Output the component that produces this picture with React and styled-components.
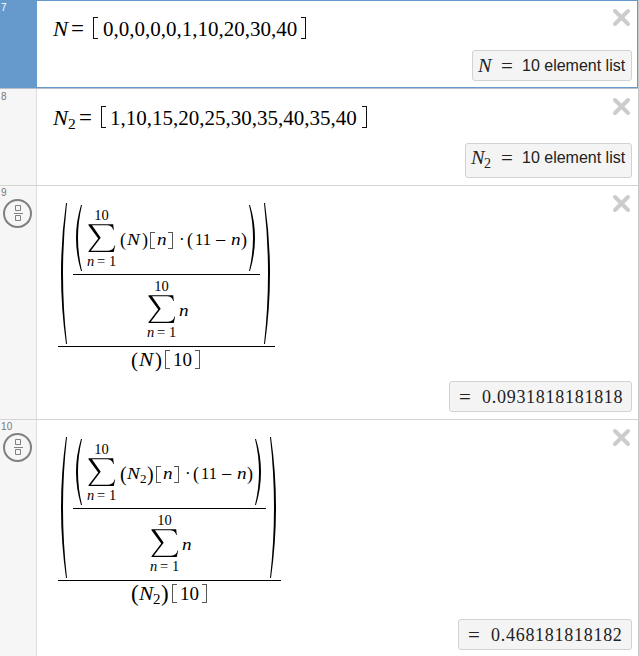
import React from 'react';
import styled, { createGlobalStyle } from 'styled-components';

const Global = createGlobalStyle`
  * { box-sizing: border-box; }
  body { margin: 0; background: #fff; overflow: hidden; }
`;

const List = styled.main`
  width: 639px;
  height: 656px;
  overflow: hidden;
  border-right: 1px solid #c8c8c8;
  background: #fff;
  color: #000;
  font-family: 'Liberation Serif', serif;
`;

const Row = styled.section`
  display: flex;
  height: ${(p) => p.$h}px;
  border-bottom: 1px solid ${(p) => (p.$active ? '#b9bfc6' : '#d4d4d4')};
`;

const Gutter = styled.div`
  width: 37px;
  flex: none;
  padding: ${(p) => p.$pt || 2}px 0 0 1px;
  background: ${(p) => (p.$active ? '#6699cc' : '#f6f6f6')};
  border-right: 1px solid ${(p) => (p.$active ? '#6699cc' : '#dedede')};
  color: ${(p) => (p.$active ? '#fff' : '#777')};
  font: 10px/12px 'Liberation Sans', sans-serif;
  letter-spacing: 0.3px;
`;

const FractionButton = styled.div`
  display: flex;
  margin: 0 0 0 2px;
`;

const Body = styled.div`
  flex: 1;
  display: flex;
  flex-direction: column;
  justify-content: space-between;
  border: solid #6699cc;
  border-width: ${(p) => (p.$active ? '1px 1px 1px 0' : '0')};
  padding: 0 ${(p) => (p.$active ? 5 : 6)}px ${(p) => p.$pb}px 0;
`;

const Top = styled.div`
  display: flex;
  justify-content: space-between;
`;

const Formula = styled.div`
  padding: ${(p) => p.$pt}px 0 0 ${(p) => p.$pl}px;
`;

const CloseIcon = styled.svg`
  flex: none;
  margin-top: ${(p) => p.$mt}px;
`;

const Result = styled.div`
  align-self: flex-end;
  width: ${(p) => p.$w}px;
  height: ${(p) => p.$h}px;
  background: #f4f4f4;
  border: 1px solid #d2d2d2;
  border-radius: 3px;
  color: #222;
`;

const Run = styled.div`
  --base: ${(p) => p.$base}px;
  display: flex;
  align-items: flex-start;
  height: ${(p) => p.$h}px;
  padding-left: ${(p) => p.$pl || 0}px;
`;

const Tok = styled.span`
  flex: none;
  width: ${(p) => p.$w}px;
  margin-top: calc(var(--base) - 15px + ${(p) => p.$dy || 0}px);
  height: 20px;
  line-height: 20px;
  font-size: ${(p) => p.$s}px;
  padding-top: ${(p) => 5 - p.$s * 0.3375}px;
  letter-spacing: ${(p) => p.$ls || 0}px;
  white-space: pre;
`;

const Var = styled(Tok)`
  font-style: italic;
  transform: scaleX(1.13);
  transform-origin: 0 50%;
`;

const Sans = styled(Tok)`
  font-family: 'Liberation Sans', sans-serif;
`;

const Bracket = styled.i`
  flex: none;
  width: 5px;
  height: ${(p) => p.$h}px;
  margin: calc(var(--base) - ${(p) => p.$up}px) ${(p) => p.$gap || 0}px 0 ${(p) => p.$ml || 0}px;
  border: 1px solid ${(p) => (p.$h > 20 ? '#111' : '#555')};
  border-${(p) => (p.$close ? 'left' : 'right')}: 0;
`;

const Fraction = styled.div`
  width: ${(p) => p.$w}px;
  flex: none;
`;

const Bar = styled.div`
  height: 1px;
  background: #000;
`;

const ParenBox = styled.div`
  flex: none;
  width: ${(p) => p.$w}px;
  padding: ${(p) => p.$pt || 0}px 0 0 ${(p) => p.$pl}px;
  svg { display: block; }
`;

const SumBox = styled.div`
  flex: none;
  width: ${(p) => p.$w}px;
  margin-top: ${(p) => p.$mt}px;
  svg { display: block; margin: 1px 0 0 1px; }
`;

const Limit = styled.div`
  display: flex;
  justify-content: center;
  width: 29px;
  height: 16px;
  font-size: 14.5px;
  line-height: 16px;
  white-space: pre;
`;

const LimitPart = styled.span`
  width: ${(p) => p.$w}px;
  font-style: ${(p) => (p.$i ? 'italic' : 'normal')};
`;

function Paren({ h, w, pl, pt, close }) {
  const d = `M6 0Q-2 ${h * 0.5} 6 ${h}L5 ${h}Q-5 ${h * 0.5} 5 0Z`;
  return (
    <ParenBox $w={w} $pl={pl} $pt={pt}>
      <svg width="6" height={h} viewBox={`0 0 6 ${h}`}>
        <path d={d} fill="#000" transform={close ? 'translate(6 0) scale(-1 1)' : undefined} />
      </svg>
    </ParenBox>
  );
}

function Sum({ w, mt }) {
  return (
    <SumBox $w={w} $mt={mt}>
      <Limit>10</Limit>
      <svg width="28" height="29" viewBox="0 0 28 29">
        <path d="M0.5 0.2H25.2L25.8 6H25.2C24.4 2.4 22 1.2 18 1.2H4L12.7 13.7L2.8 26.7H20C23.8 26.7 25.8 24.8 26.5 21.6H27.1L25.8 28.1H0.5V27.2L10.2 14.6L0.5 1.2Z" />
      </svg>
      <Limit>
        <LimitPart $w={10} $i>n</LimitPart>
        <LimitPart $w={12}>=</LimitPart>
        <LimitPart $w={7}>1</LimitPart>
      </Limit>
    </SumBox>
  );
}

function Close({ mt }) {
  return (
    <CloseIcon $mt={mt} width="20" height="20" viewBox="0 0 20 20">
      <path d="M3 3L16 16M16 3L3 16" stroke="#ccc" strokeWidth="4" strokeLinecap="round" />
    </CloseIcon>
  );
}

function TemplateIcon() {
  return (
    <FractionButton>
      <svg width="30" height="30" viewBox="0 0 30 30" fill="none">
        <circle cx="14.5" cy="14.5" r="13.5" stroke="#808080" strokeWidth="2" />
        <path d="M12.5 6.5h5v5h-5zM12.5 16.5h5v5h-5zM11 14.5h9" stroke="#808080" />
      </svg>
    </FractionButton>
  );
}

function Ratio({ sub }) {
  const e = sub ? 6 : 0;
  return (
    <Fraction $w={217 + e}>
      <Run $h={143}>
        <Paren h={141} w={15} pl={3} />
        <Fraction $w={187 + e}>
          <Run $h={71} $base={42}>
            <Paren h={66} w={14} pl={3} pt={2} />
            <Sum w={33} mt={4} />
            <Tok $s={sub ? 20 : 18} $w={7}>(</Tok>
            <Var $s={17} $w={sub ? 13 : 15}>N</Var>
            {sub && <Tok $s={13} $w={7} $dy={4}>2</Tok>}
            <Tok $s={sub ? 20 : 18} $w={sub ? 8 : 7}>)</Tok>
            <Bracket $h={17} $up={13} $ml={1} $gap={2} />
            <Var $s={17} $w={10}>n</Var>
            <Bracket $h={17} $up={13} $close $ml={1} $gap={6} />
            <Tok $s={17} $w={8}>·</Tok>
            <Tok $s={18} $w={8}>(</Tok>
            <Tok $s={16.5} $w={20}>11</Tok>
            <Tok $s={20} $w={16}>−</Tok>
            <Var $s={17} $w={10}>n</Var>
            <Tok $s={18} $w={7}>)</Tok>
            <Paren h={66} w={8} pl={1} pt={2} close />
          </Run>
          <Bar />
          <Run $h={71} $base={41} $pl={74 + e / 2}>
            <Sum w={32} mt={3} />
            <Var $s={17} $w={10}>n</Var>
          </Run>
        </Fraction>
        <Paren h={141} w={15} pl={4} close />
      </Run>
      <Bar />
      <Run $h={28} $base={18} $pl={73}>
        <Tok $s={sub ? 23 : 21} $w={8}>(</Tok>
        <Var $s={19} $w={sub ? 14 : 16}>N</Var>
        {sub && <Tok $s={15} $w={8} $dy={5}>2</Tok>}
        <Tok $s={sub ? 23 : 21} $w={sub ? 10 : 10}>)</Tok>
        <Bracket $h={19} $up={15} $ml={sub ? 1 : 0} $gap={3} />
        <Tok $s={19} $w={22}>10</Tok>
        <Bracket $h={19} $up={15} $close />
      </Run>
    </Fraction>
  );
}

function ListResult({ sub }) {
  return (
    <Result $w={sub ? 167 : 160} $h={sub ? 35 : 31}>
      <Run $base={sub ? 19 : 20} $h={28} $pl={5}>
        <Var $s={18} $w={sub ? 13 : 23}>N</Var>
        {sub && <Tok $s={14} $w={17} $dy={6}>2</Tok>}
        <Tok $s={21} $w={21}>=</Tok>
        <Sans $s={16} $w={104}>10 element list</Sans>
      </Run>
    </Result>
  );
}

function NumberResult({ value, w }) {
  return (
    <Result $w={w} $h={31}>
      <Run $base={20} $h={28} $pl={9}>
        <Tok $s={21} $w={23}>=</Tok>
        <Tok $s={18} $w={142} $ls={0.72}>{value}</Tok>
      </Run>
    </Result>
  );
}

export default function App() {
  return (
    <>
      <Global />
      <List>
        <Row $h={89} $active>
          <Gutter $active>7</Gutter>
          <Body $active $pb={6}>
            <Top>
              <Formula $pt={12} $pl={16}>
                <Run $h={32} $base={21}>
                  <Var $s={20} $w={18}>N</Var>
                  <Tok $s={23} $w={22}>=</Tok>
                  <Bracket $h={22} $up={17} $gap={5} />
                  <Tok $s={21} $w={198}>0,0,0,0,0,1,10,20,30,40</Tok>
                  <Bracket $h={22} $up={17} $close />
                </Run>
              </Formula>
              <Close mt={7} />
            </Top>
            <ListResult />
          </Body>
        </Row>
        <Row $h={97}>
          <Gutter>8</Gutter>
          <Body $pb={7}>
            <Top>
              <Formula $pt={13} $pl={16}>
                <Run $h={34} $base={21}>
                  <Var $s={20} $w={15}>N</Var>
                  <Tok $s={15.5} $w={11} $dy={6}>2</Tok>
                  <Tok $s={23} $w={22}>=</Tok>
                  <Bracket $h={22} $up={17} $gap={4} />
                  <Tok $s={21} $w={252}>1,10,15,20,25,30,35,40,35,40</Tok>
                  <Bracket $h={22} $up={17} $close />
                </Run>
              </Formula>
              <Close mt={8} />
            </Top>
            <ListResult sub />
          </Body>
        </Row>
        <Row $h={234}>
          <Gutter $pt={1}>9<TemplateIcon /></Gutter>
          <Body $pb={7}>
            <Top>
              <Formula $pt={17} $pl={21}><Ratio /></Formula>
              <Close mt={8} />
            </Top>
            <NumberResult value="0.0931818181818" w={183} />
          </Body>
        </Row>
        <Row $h={237}>
          <Gutter $pt={1}>10<TemplateIcon /></Gutter>
          <Body $pb={6}>
            <Top>
              <Formula $pt={17} $pl={21}><Ratio sub /></Formula>
              <Close mt={8} />
            </Top>
            <NumberResult value="0.468181818182" w={174} />
          </Body>
        </Row>
      </List>
    </>
  );
}
